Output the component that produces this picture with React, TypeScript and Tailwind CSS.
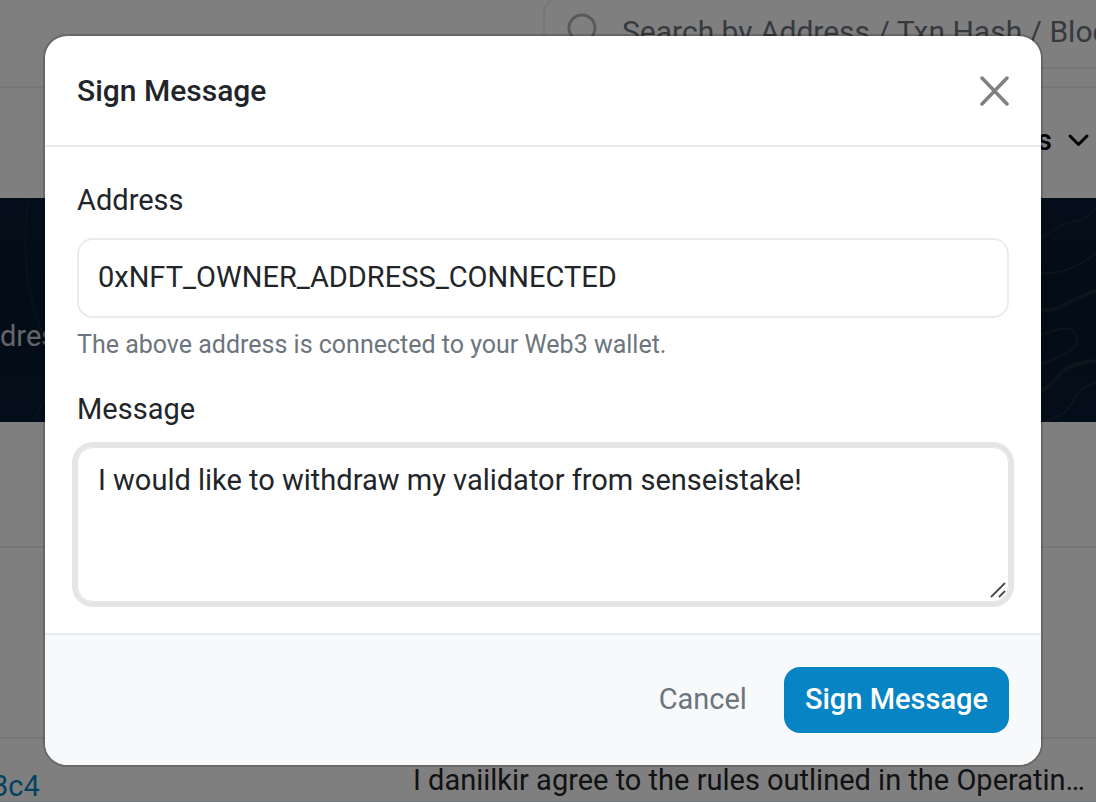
import React from "react";

function SiteHeader() {
  return (
    <header className="flex h-[88px] items-end border-b-2 border-[#e9ecef] pb-[17px]">
      <div className="ml-[543px] flex h-[72px] grow shrink-0 items-center gap-6 rounded-l-2xl border-2 border-r-0 border-[#e9ecef] pl-[21px]">
        <svg width="32" height="40" viewBox="0 0 32 40" fill="none" stroke="#adb5bd" strokeWidth="3" className="shrink-0" aria-hidden="true">
          <circle cx="16" cy="15" r="13" />
          <path d="M25 25l6 6" strokeLinecap="round" />
        </svg>
        <input
          type="search"
          aria-label="Search"
          placeholder="Search by Address / Txn Hash / Block"
          className="w-[500px] shrink-0 bg-transparent pb-1 text-[30px] leading-[43px] outline-none placeholder:text-[#6c757d]"
        />
      </div>
    </header>
  );
}

function SiteNav() {
  return (
    <nav className="flex h-[110px] items-center justify-end pr-1 pb-1.5">
      <a href="#more" className="flex items-center gap-3 text-[29px] font-medium leading-[43px] text-black">
        s
        <svg width="28" height="28" viewBox="0 0 28 28" fill="none" stroke="currentColor" strokeWidth="3" strokeLinecap="round" strokeLinejoin="round" aria-hidden="true">
          <path d="M6 10l8.500 8.500L23 10" />
        </svg>
      </a>
    </nav>
  );
}

function Hero() {
  return (
    <section className="relative flex h-[224px] items-center bg-linear-to-b from-[#081d35] via-[#041a2e] to-[#081d35] pt-13">
      <svg className="absolute top-0 left-0" width="50" height="224" fill="none" stroke="#132538" strokeWidth="2" aria-hidden="true">
        <path d="M28 0C22 60 26 95 44 140M50 190L33 224" />
      </svg>
      <svg className="absolute top-0 right-0" width="56" height="224" fill="none" stroke="#172a38" strokeWidth="2" aria-hidden="true">
        <path d="M0 39C14 34 20 26 32 24S46 20 56 10" />
        <path d="M0 75C24 77 40 66 56 56" />
        <path d="M0 112C18 113 22 108 32 103S46 97 56 92" strokeWidth="4" />
        <path d="M0 137C14 133 28 126 34 134S38 149 27 155S10 162 0 167" />
        <path d="M0 194C18 184 18 173 32 168S46 164 56 163" strokeWidth="4" />
        <path d="M6 224L24 215C34 206 36 188 56 185" />
      </svg>
      <p className="relative text-[29px] leading-[43px] text-[#c8cbcf]">dress</p>
    </section>
  );
}

function BackgroundPage() {
  return (
    <div className="h-full overflow-hidden bg-white" aria-hidden="true">
      <SiteHeader />
      <SiteNav />
      <Hero />
      <div className="h-[126px] border-b-2 border-[#e9ecef]" />
      <div className="h-[191px] border-b-2 border-[#e9ecef]" />
      <div className="flex h-16 items-center justify-between gap-8 border-b-2 border-[#e9ecef] pr-[11px] text-[29px] leading-[43px] text-[#212529]">
        <a href="#signature" className="-ml-2 pt-8 text-[#0784c3]">3c4</a>
        <p className="pt-5 whitespace-nowrap">I daniilkir agree to the rules outlined in the Operatin…</p>
      </div>
    </div>
  );
}

function SignMessageDialog() {
  return (
    <form
      role="dialog"
      aria-modal="true"
      aria-labelledby="dialog-title"
      onSubmit={(e) => e.preventDefault()}
      className="w-full overflow-hidden rounded-[24px] border-2 border-black/18 bg-white bg-clip-padding"
    >
      <header className="flex h-[111px] items-center justify-between border-b-2 border-[#e9ecef] px-8">
        <h1 id="dialog-title" className="text-[30px] font-medium leading-[43px]">Sign Message</h1>
        <button type="button" aria-label="Close" className="text-[#808080]">
          <svg width="29" height="30" viewBox="0 0 29 30" fill="none" stroke="currentColor" strokeWidth="3.500" strokeLinecap="round" aria-hidden="true">
            <path d="M2 2l25 26M27 2l-25 26" />
          </svg>
        </button>
      </header>

      <div className="flex flex-col px-8 pt-8 pb-[31px]">
        <label htmlFor="address" className="mb-4">Address</label>
        <input
          id="address"
          readOnly
          defaultValue="0xNFT_OWNER_ADDRESS_CONNECTED"
          aria-describedby="address-help"
          className="h-20 rounded-2xl border-2 border-[#e9ecef] px-[19px] pb-[3px] outline-none"
        />
        <p id="address-help" className="mt-2 mb-6 text-[25px] leading-[38px] text-[#6c757d]">
          The above address is connected to your Web3 wallet.
        </p>
        <label htmlFor="message" className="mb-4">Message</label>
        <div className="relative flex">
          <textarea
            id="message"
            defaultValue="I would like to withdraw my validator from senseistake!"
            className="h-[155px] grow resize-none rounded-2xl border border-[#e5e5e5] px-5 py-[11px] ring-5 ring-[#e5e5e5] outline-none"
          />
          <svg className="pointer-events-none absolute right-[3px] bottom-1" width="16" height="16" viewBox="0 0 16 16" fill="none" stroke="#4a4a4a" strokeWidth="1.800" aria-hidden="true">
            <path d="M1 15L15 1M9 15l6-6" />
          </svg>
        </div>
      </div>

      <footer className="flex h-[132px] items-center justify-end gap-4 border-t-2 border-[#e9ecef] bg-[#f8f9fb] px-8">
        <button type="button" className="h-[66px] px-[21px] pb-0.5 text-[#6c757d]">Cancel</button>
        <button type="submit" className="h-[66px] rounded-2xl bg-[#0784c3] px-[21px] pb-0.5 font-medium text-white">
          Sign Message
        </button>
      </footer>
    </form>
  );
}

export default function App() {
  return (
    <main className="relative h-screen overflow-hidden font-['Roboto',sans-serif]">
      <BackgroundPage />
      <div className="absolute inset-0 overflow-auto bg-black/50 pt-[34px] pr-[53px] pl-[43px] text-[29px] leading-[43px] text-[#212529]">
        <SignMessageDialog />
      </div>
    </main>
  );
}
